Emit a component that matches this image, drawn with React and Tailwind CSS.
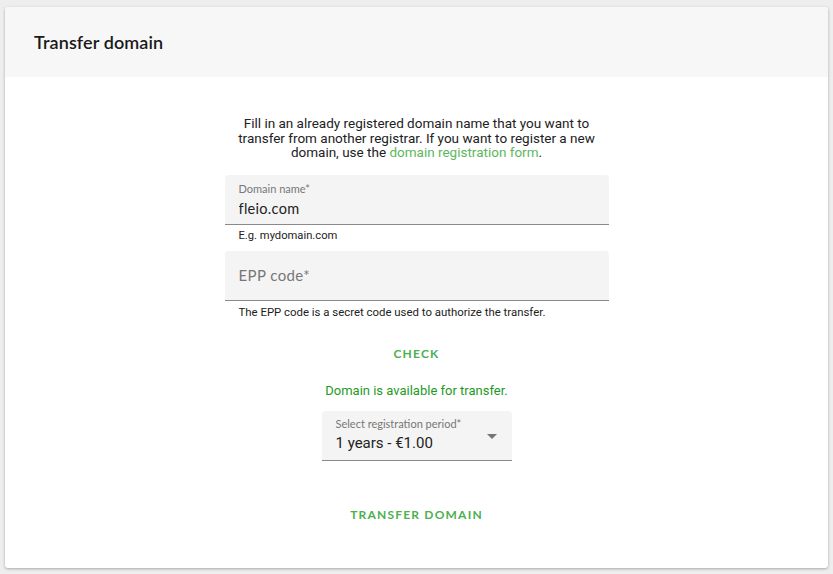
import React, { useState } from 'react';

export default function App() {
  const [domain, setDomain] = useState('fleio.com');
  const [epp, setEpp] = useState('');

  return (
    <div className="h-[574px] w-full bg-[#eeeeee] pt-[7px] px-[5px] font-['Lato',sans-serif]">
      <div className="bg-white rounded-[3px] shadow-[0_1px_3px_rgba(0,0,0,0.3)] overflow-hidden">
        {/* Header */}
        <div className="h-[70px] bg-[#f7f7f7] flex items-center pl-[29px]">
          <h2 className="text-[18px] font-semibold text-[#1a1a1a] tracking-[0.1px]">Transfer domain</h2>
        </div>

        {/* Body */}
        <div className="flex flex-col items-center pt-[39px] pb-[35px]">
          <p className="w-[362px] text-center text-[13.5px] leading-[14.5px] text-[#222] font-['Roboto',sans-serif]">
            Fill in an already registered domain name that you want to transfer from another registrar. If you want to register a new domain, use the{' '}
            <a className="text-[#5cb85c]">domain registration form</a>.
          </p>

          {/* Domain name */}
          <div className="w-[384px] mt-[15.5px]">
            <div className="h-[50px] bg-[#f4f4f4] rounded-t-[4px] border-b border-[#8a8a8a] px-[14px] pt-[7px]">
              <div className="text-[11px] leading-[14px] text-[#777]">Domain name*</div>
              <input
                value={domain}
                onChange={(e) => setDomain(e.target.value)}
                className="w-full bg-transparent outline-none text-[14.5px] leading-[20px] text-[#222] tracking-[0.3px] -mt-[2px]"
              />
            </div>
            <div className="text-[11.2px] leading-[14px] text-[#222] px-[14px] pt-[4px] font-['Roboto',sans-serif]">E.g. mydomain.com</div>
          </div>

          {/* EPP code */}
          <div className="w-[384px] mt-[8px]">
            <div className="h-[50px] bg-[#f4f4f4] rounded-t-[4px] border-b border-[#8a8a8a] px-[14px] flex items-center">
              <input
                value={epp}
                onChange={(e) => setEpp(e.target.value)}
                placeholder="EPP code*"
                className="w-full bg-transparent outline-none text-[15px] text-[#222] placeholder:text-[#777] tracking-[0.4px]"
              />
            </div>
            <div className="text-[11.4px] leading-[14px] text-[#222] px-[14px] pt-[4px] font-['Roboto',sans-serif]">
              The EPP code is a secret code used to authorize the transfer.
            </div>
          </div>

          <button className="mt-[17px] h-[36px] px-[16px] text-[12px] font-bold tracking-[1.2px] text-[#4caf50]">
            CHECK
          </button>

          <div className="mt-[11px] text-[13px] leading-[16px] text-[#1e9a1e] font-['Roboto',sans-serif]">
            Domain is available for transfer.
          </div>

          {/* Registration period select */}
          <div className="w-[190px] mt-[12px] h-[50px] bg-[#f4f4f4] rounded-t-[4px] border-b border-[#8a8a8a] px-[14px] pt-[6px] relative">
            <div className="text-[11px] leading-[14px] text-[#777]">Select registration period*</div>
            <div className="text-[15px] leading-[20px] text-[#222] mt-[2px] font-['Roboto',sans-serif]">1 years - €1.00</div>
            <svg className="absolute right-[15px] top-[23px]" width="10" height="5" viewBox="0 0 10 5">
              <path d="M0 0 L10 0 L5 5 Z" fill="#757575" />
            </svg>
          </div>

          <button className="mt-[36px] h-[36px] px-[16px] text-[12px] font-bold tracking-[1.2px] text-[#4caf50]">
            TRANSFER DOMAIN
          </button>
        </div>
      </div>
    </div>
  );
}
